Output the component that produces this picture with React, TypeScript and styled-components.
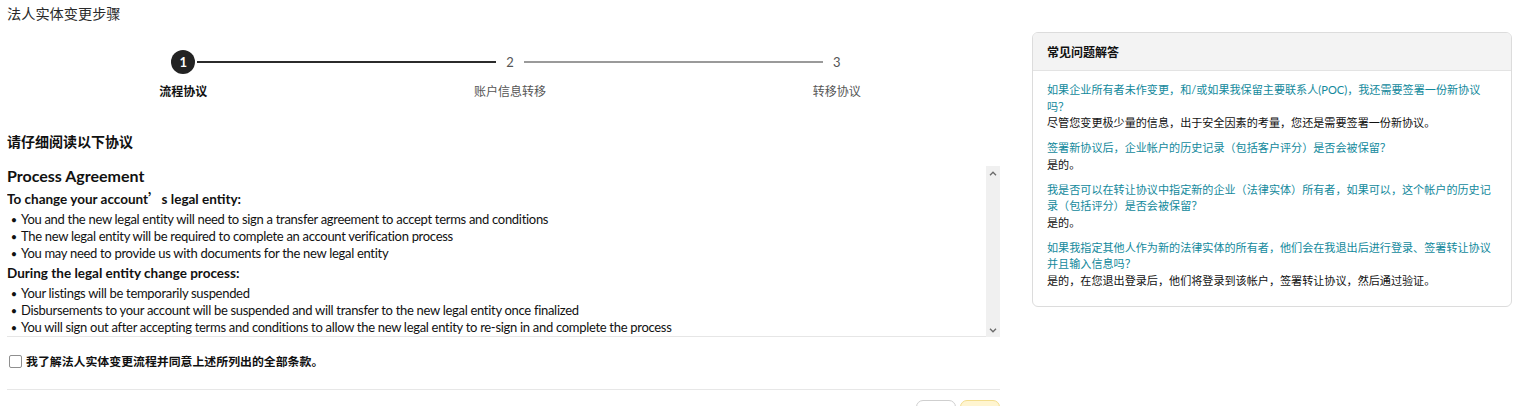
import React from "react";
import styled, { createGlobalStyle } from "styled-components";

const GlobalStyle = createGlobalStyle`
  html, body { margin: 0; padding: 0; background: #fff; overflow: hidden; }
  body { font-family: Lato, "Noto Sans CJK SC", sans-serif; color: #111; }
  * { box-sizing: border-box; }
`;

const Page = styled.div`
  display: flex;
  align-items: flex-start;
  gap: 32px;
  padding: 4px 5px 0 7px;
`;

const Main = styled.main`
  flex: 1;
  min-width: 0;
`;

const Title = styled.h1`
  margin: 0;
  font-size: 14.2px;
  line-height: 20px;
  font-weight: 400;
  color: #2a2a2a;
`;

const Stepper = styled.ol`
  list-style: none;
  padding: 0;
  margin: 26px 0 0 13px;
  display: grid;
  grid-template-columns: repeat(3, 1fr);
`;

const Step = styled.li`
  display: flex;
  flex-direction: column;
`;

const MarkerRow = styled.div`
  display: flex;
  align-items: center;
  height: 24px;
`;

const Connector = styled.span<{ $color: string }>`
  flex: 1;
  height: 2px;
  background: ${(p) => p.$color};
`;

const Circle = styled.span<{ $active?: boolean }>`
  width: 24px;
  height: 24px;
  margin: 0 2px;
  border-radius: 50%;
  display: flex;
  align-items: center;
  justify-content: center;
  font-size: 13px;
  font-weight: ${(p) => (p.$active ? 700 : 400)};
  background: ${(p) => (p.$active ? "#232323" : "transparent")};
  color: ${(p) => (p.$active ? "#fff" : "#555")};
`;

const StepLabel = styled.span<{ $active?: boolean }>`
  margin-top: 10px;
  text-align: center;
  font-size: 12px;
  line-height: 16px;
  font-weight: ${(p) => (p.$active ? 700 : 400)};
  color: ${(p) => (p.$active ? "#111" : "#555")};
`;

const SectionTitle = styled.h2`
  margin: 32px 0 0;
  font-size: 14px;
  line-height: 20px;
  font-weight: 700;
  color: #111;
`;

const ScrollBox = styled.div`
  display: flex;
  height: 171px;
  margin-top: 14px;
`;

const ScrollContent = styled.div`
  flex: 1;
  overflow: hidden;
  border-bottom: 1px solid #e6e6e6;
`;

const Track = styled.div`
  width: 14px;
  background: #f0f0f0;
  display: flex;
  flex-direction: column;
  justify-content: space-between;
  align-items: center;
  padding: 5px 0 4px;
`;

const AgreementTitle = styled.h3`
  margin: 0;
  font-size: 16px;
  line-height: 20px;
  font-weight: 700;
  color: #111;
`;

const SubHead = styled.h4<{ $first?: boolean }>`
  margin: ${(p) => (p.$first ? "4px 0 3px" : "2px 0 3px")};
  font-size: 13.5px;
  line-height: 17px;
  font-weight: 700;
  color: #111;
`;

const Quote = styled.span`
  font-family: "Noto Sans CJK SC", sans-serif;
`;

const List = styled.ul`
  list-style: none;
  margin: 0 0 3px;
  padding: 0;
`;

const Item = styled.li`
  font-size: 13px;
  line-height: 17px;
  letter-spacing: -0.3px;
  color: #111;
  &::before {
    content: "•";
    display: inline-block;
    width: 14px;
    text-align: center;
    font-size: 11px;
    letter-spacing: 0;
  }
`;

const AgreeRow = styled.label`
  display: flex;
  align-items: center;
  gap: 4px;
  margin-top: 16px;
  padding-left: 2px;
`;

const Check = styled.input`
  appearance: none;
  width: 13px;
  height: 13px;
  margin: 0;
  border: 1px solid #8f8f8f;
  border-radius: 2px;
  background: #fff;
`;

const AgreeText = styled.span`
  font-size: 11.9px;
  line-height: 17px;
  font-weight: 700;
  color: #111;
`;

const Divider = styled.hr`
  margin: 19px 0 0;
  border: 0;
  border-top: 1px solid #e7e7e7;
`;

const Actions = styled.div`
  display: flex;
  justify-content: flex-end;
  gap: 4px;
  margin-top: 10px;
`;

const Button = styled.button<{ $primary?: boolean }>`
  width: 40px;
  height: 30px;
  border-radius: 7px;
  border: 1px solid ${(p) => (p.$primary ? "#f3de8e" : "#cfcfcf")};
  background: ${(p) => (p.$primary ? "#fff5d1" : "#fff")};
  padding: 0;
`;

const Aside = styled.aside`
  width: 480px;
  flex-shrink: 0;
  margin-top: 28px;
  border: 1px solid #dcdcdc;
  border-radius: 6px;
  overflow: hidden;
`;

const CardHeader = styled.div`
  height: 38px;
  display: flex;
  align-items: center;
  padding: 0 14px;
  background: #f3f3f3;
  border-bottom: 1px solid #e3e3e3;
  font-size: 12px;
  font-weight: 700;
  color: #111;
`;

const CardBody = styled.div`
  padding: 11px 14px 17px;
`;

const Faq = styled.div`
  & + & {
    margin-top: 8.5px;
  }
`;

const Question = styled.div`
  font-size: 11.1px;
  line-height: 16.5px;
  color: #12899c;
`;

const Answer = styled.div`
  font-size: 11.1px;
  line-height: 16.5px;
  color: #111;
`;

const Chevron = ({ up }: { up?: boolean }) => (
  <svg width="8" height="5" viewBox="0 0 8 5" aria-hidden>
    <polyline
      points={up ? "1,4.2 4,1.2 7,4.2" : "1,0.8 4,3.8 7,0.8"}
      fill="none"
      stroke="#6a6a6a"
      strokeWidth="1.3"
    />
  </svg>
);

const steps = [
  { n: "1", label: "流程协议", active: true, left: "transparent", right: "#2b2b2b" },
  { n: "2", label: "账户信息转移", active: false, left: "#2b2b2b", right: "#9a9a9a" },
  { n: "3", label: "转移协议", active: false, left: "#9a9a9a", right: "transparent" },
];

const faqs = [
  {
    q: "如果企业所有者未作变更，和/或如果我保留主要联系人(POC)，我还需要签署一份新协议吗？",
    a: "尽管您变更极少量的信息，出于安全因素的考量，您还是需要签署一份新协议。",
  },
  { q: "签署新协议后，企业帐户的历史记录（包括客户评分）是否会被保留？", a: "是的。" },
  {
    q: "我是否可以在转让协议中指定新的企业（法律实体）所有者，如果可以，这个帐户的历史记录（包括评分）是否会被保留？",
    a: "是的。",
  },
  {
    q: "如果我指定其他人作为新的法律实体的所有者，他们会在我退出后进行登录、签署转让协议并且输入信息吗？",
    a: "是的，在您退出登录后，他们将登录到该帐户，签署转让协议，然后通过验证。",
  },
];

export default function App() {
  return (
    <>
      <GlobalStyle />
      <Page>
        <Main>
          <Title>法人实体变更步骤</Title>
          <Stepper>
            {steps.map((s) => (
              <Step key={s.n}>
                <MarkerRow>
                  <Connector $color={s.left} />
                  <Circle $active={s.active}>{s.n}</Circle>
                  <Connector $color={s.right} />
                </MarkerRow>
                <StepLabel $active={s.active}>{s.label}</StepLabel>
              </Step>
            ))}
          </Stepper>
          <SectionTitle>请仔细阅读以下协议</SectionTitle>
          <ScrollBox>
            <ScrollContent>
              <AgreementTitle>Process Agreement</AgreementTitle>
              <SubHead $first>
                To change your account<Quote>’</Quote>s legal entity:
              </SubHead>
              <List>
                <Item>You and the new legal entity will need to sign a transfer agreement to accept terms and conditions</Item>
                <Item>The new legal entity will be required to complete an account verification process</Item>
                <Item>You may need to provide us with documents for the new legal entity</Item>
              </List>
              <SubHead>During the legal entity change process:</SubHead>
              <List>
                <Item>Your listings will be temporarily suspended</Item>
                <Item>Disbursements to your account will be suspended and will transfer to the new legal entity once finalized</Item>
                <Item>You will sign out after accepting terms and conditions to allow the new legal entity to re-sign in and complete the process</Item>
              </List>
            </ScrollContent>
            <Track>
              <Chevron up />
              <Chevron />
            </Track>
          </ScrollBox>
          <AgreeRow>
            <Check type="checkbox" />
            <AgreeText>我了解法人实体变更流程并同意上述所列出的全部条款。</AgreeText>
          </AgreeRow>
          <Divider />
          <Actions>
            <Button aria-label="返回" />
            <Button $primary aria-label="继续" />
          </Actions>
        </Main>
        <Aside>
          <CardHeader>常见问题解答</CardHeader>
          <CardBody>
            {faqs.map((f, i) => (
              <Faq key={i}>
                <Question>{f.q}</Question>
                <Answer>{f.a}</Answer>
              </Faq>
            ))}
          </CardBody>
        </Aside>
      </Page>
    </>
  );
}
